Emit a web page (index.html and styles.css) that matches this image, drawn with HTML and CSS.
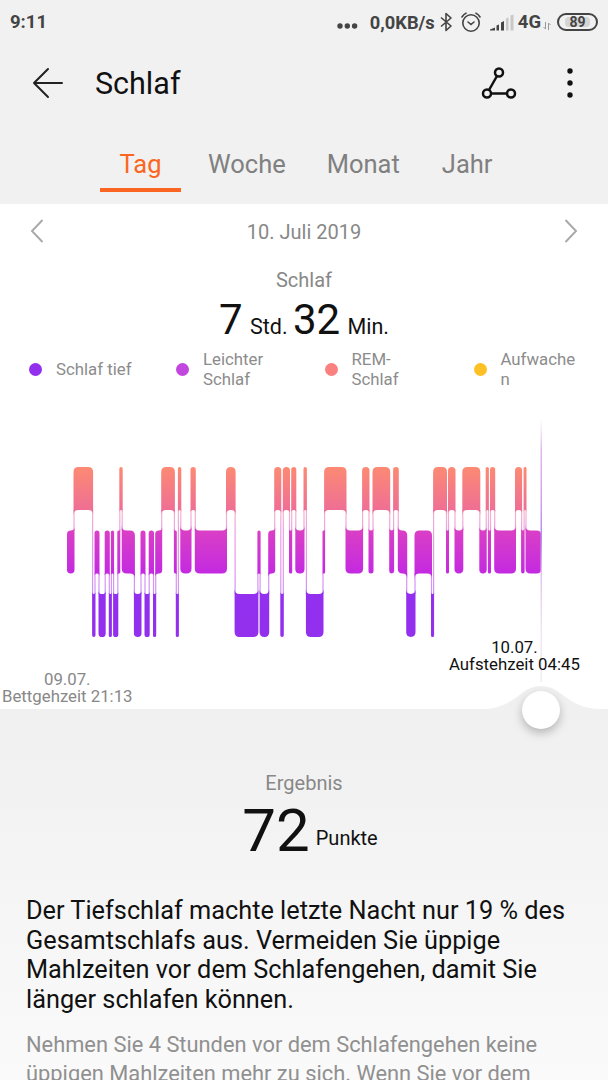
FILE: index.html
```html
<!DOCTYPE html>
<html lang="de">
<head>
  <meta charset="UTF-8">
  <meta name="viewport" content="width=device-width, initial-scale=1.0">
  <title>Schlaf</title>
  <link rel="stylesheet" href="styles.css">
</head>
<body>
  <div class="app">
    <div class="status-bar">
      <span class="time">9:11</span>
      <div class="status-icons">
        <svg class="dots" width="21" height="6" viewBox="0 0 21 6" fill="#444"><circle cx="3" cy="3" r="2.7"/><circle cx="10.3" cy="3" r="2.7"/><circle cx="17.6" cy="3" r="2.7"/></svg>
        <span class="speed">0,0KB/s</span>
        <svg class="bluetooth" width="12" height="20" viewBox="0 0 12 20" fill="none" stroke="#444" stroke-width="1.6" stroke-linejoin="round"><path d="M1 5.5L11 14L6 18.5V1.5L11 6L1 14.5"/></svg>
        <svg class="alarm" width="20" height="20" viewBox="0 0 20 20" fill="none" stroke="#444" stroke-width="1.6" stroke-linecap="round"><circle cx="10" cy="11" r="8.2"/><path d="M7 10L10 12.5L13 10M1 5Q2.500 2.300 5 1.200M19 5Q17.500 2.300 15 1.200"/></svg>
        <svg class="signal" width="24" height="17" viewBox="0 0 24 17" fill="#444"><path d="M0 15.500L5 13.500V16.500H0ZM6.500 11.500L9 10.500V16.500H6.500ZM11 8.500L14 7V16.500H11Z"/><path d="M16 4.500L18.500 3.500V16.500H16ZM20.500 1.500L23.500 .5V16.500H20.500Z" fill="#c8c8c8"/></svg>
        <span class="net">4G</span>
        <svg class="updown" width="8" height="8" viewBox="0 0 8 8" fill="none" stroke="#999" stroke-width="1"><path d="M2.500 0V7L.5 5M5.500 8V1L7.500 3"/></svg>
        <span class="battery"><span class="battery-level">89</span></span>
      </div>
    </div>

    <div class="header">
      <svg class="back" width="32" height="32" viewBox="0 0 32 32" fill="none" stroke="#222" stroke-width="2" stroke-linecap="round" stroke-linejoin="round"><path d="M16 2L2 16L16 30M2 16H30"/></svg>
      <h1>Schlaf</h1>
      <svg class="share" width="36" height="32" viewBox="0 0 36 32" fill="none" stroke="#111" stroke-width="2.500"><circle cx="18" cy="5.500" r="4"/><circle cx="6" cy="26.500" r="4"/><circle cx="30" cy="26.500" r="4"/><path d="M16 9L8 23M10 26.500H26"/></svg>
      <svg class="more" width="6" height="32" viewBox="0 0 6 32" fill="#111"><circle cx="3" cy="4" r="2.700"/><circle cx="3" cy="16" r="2.700"/><circle cx="3" cy="28" r="2.700"/></svg>
    </div>

    <div class="tabs">
      <div class="tab active">Tag</div>
      <div class="tab">Woche</div>
      <div class="tab">Monat</div>
      <div class="tab">Jahr</div>
    </div>

    <div class="panel">
      <div class="date-row">
        <svg width="14" height="24" viewBox="0 0 14 24" fill="none" stroke="#aaa" stroke-width="2"><path d="M12.500 1L2 12L12.500 23"/></svg>
        <span>10. Juli 2019</span>
        <svg width="14" height="24" viewBox="0 0 14 24" fill="none" stroke="#aaa" stroke-width="2"><path d="M1.500 1L12 12L1.500 23"/></svg>
      </div>
      <div class="label">Schlaf</div>
      <div class="duration"><b>7</b> Std. <b>32</b> Min.</div>
      <div class="legend">
        <div class="legend-item"><i class="dot deep"></i><span>Schlaf tief</span></div>
        <div class="legend-item"><i class="dot light"></i><span>Leichter<br>Schlaf</span></div>
        <div class="legend-item"><i class="dot rem"></i><span>REM-<br>Schlaf</span></div>
        <div class="legend-item"><i class="dot awake"></i><span>Aufwache<br>n</span></div>
      </div>
      <div class="chart">
        <svg id="chart" width="608" height="309" viewBox="0 400 608 309">
          <defs>
            <linearGradient id="stages" gradientUnits="userSpaceOnUse" x1="0" y1="467" x2="0" y2="637">
              <stop offset="0" stop-color="#fc8a73"/>
              <stop offset=".25" stop-color="#ef6f94"/>
              <stop offset=".37" stop-color="#da40c4"/>
              <stop offset=".62" stop-color="#c42ae0"/>
              <stop offset=".75" stop-color="#932fee"/>
              <stop offset="1" stop-color="#9230ee"/>
            </linearGradient>
            <linearGradient id="cursor" x1="0" y1="0" x2="0" y2="1">
              <stop offset="0" stop-color="#e9c6ee"/>
              <stop offset=".3" stop-color="#d3a3ea"/>
              <stop offset=".45" stop-color="#b78cf0"/>
              <stop offset=".6" stop-color="#e6c4f0"/>
              <stop offset=".8" stop-color="#f1e4f4"/>
              <stop offset="1" stop-color="#eee"/>
            </linearGradient>
          </defs>
          <g id="bars" fill="url(#stages)"></g>
          <path d="M541 418L542 450V682H540.500V450Z" fill="url(#cursor)"/>
          <path d="M486 709C516 707 520 686 541 686S566 707 598 709Z" fill="#f0f0f0"/>
        </svg>
        <div class="bed-time">09.07.<br>Bettgehzeit 21:13</div>
        <div class="wake-time">10.07.<br>Aufstehzeit 04:45</div>
        <div class="knob"></div>
      </div>
    </div>

    <div class="result">
      <div class="label">Ergebnis</div>
      <div class="score"><b>72</b><span>Punkte</span></div>
      <p class="advice">Der Tiefschlaf machte letzte Nacht nur 19 % des Gesamtschlafs aus. Vermeiden Sie üppige Mahlzeiten vor dem Schlafengehen, damit Sie länger schlafen können.</p>
      <p class="detail">Nehmen Sie 4 Stunden vor dem Schlafengehen keine üppigen Mahlzeiten mehr zu sich. Wenn Sie vor dem</p>
    </div>
  </div>
  <script src="chart.js"></script>
</body>
</html>
```
FILE: styles.css
```css
* {
  box-sizing: border-box;
}

body {
  margin: 0;
  background: #f1f1f1;
  font-family: Roboto, "Liberation Sans", sans-serif;
  color: #111;
}

.app {
  width: 608px;
  height: 1080px;
  overflow: hidden;
}

h1, p {
  margin: 0;
}

b {
  font-weight: 400;
}

svg {
  display: block;
  flex: none;
}

.status-bar {
  display: flex;
  justify-content: space-between;
  height: 44px;
  padding: 0 10px;
  align-items: center;
  font-size: 18.5px;
  font-weight: 700;
  color: #444;
}

.status-icons {
  display: flex;
  align-items: center;
}

.dots {
  margin: 8px 12px 0 0;
}

.speed {
  font-size: 18.3px;
}

.bluetooth {
  margin: 0 9px 0 5px;
}

.signal {
  margin: 0 4px 0 9px;
}

.updown {
  margin: 7px 6px 0 2px;
}

.battery {
  width: 41px;
  height: 18px;
  padding: 2px 6px;
  border: 2px solid #444;
  border-radius: 9px;
}

.battery-level {
  display: block;
  height: 10px;
  border-radius: 4px;
  background: #d5d5d5;
  font-size: 14px;
  line-height: 11px;
  text-align: center;
}

.header {
  display: flex;
  align-items: center;
  height: 78px;
  padding: 0 35px 0 32px;
}

.header h1 {
  flex: 1;
  margin-left: 31px;
  font-size: 30.5px;
  font-weight: 400;
}

.more {
  margin-left: 50px;
}

.tabs {
  display: flex;
  height: 82px;
  padding: 20px 0 0 100px;
}

.tab {
  height: 50px;
  margin-right: 27px;
  padding-top: 7px;
  font-size: 25.5px;
  line-height: 31px;
  color: #808080;
}

.tab.active {
  width: 81px;
  border-bottom: 4px solid #fb6522;
  color: #fb6522;
  text-align: center;
}

.tab:nth-child(3) {
  margin: 0 42px 0 14px;
}

.panel {
  height: 505px;
  background: #fff;
}

.date-row {
  display: flex;
  justify-content: space-between;
  align-items: center;
  height: 54px;
  padding: 0 30px;
  font-size: 20px;
  color: #888;
}

.date-row span {
  padding-top: 2px;
}

.label {
  height: 36px;
  font-size: 20px;
  line-height: 36px;
  text-align: center;
  color: #888;
}

.panel .label {
  padding-top: 4px;
}

.duration {
  height: 49px;
  padding-top: 1px;
  font-size: 21.5px;
  line-height: 50px;
  text-align: center;
}

.duration b {
  margin-right: 2px;
  font-size: 42px;
}

.legend {
  display: grid;
  grid-template-columns: 147px 148.500px 149px 1fr;
  height: 52px;
  padding-left: 29px;
}

.legend-item {
  display: flex;
  align-items: center;
  font-size: 16.8px;
  line-height: 20px;
  color: #8c8c8c;
}

.dot {
  width: 13px;
  height: 13px;
  margin-right: 14px;
  border-radius: 50%;
}

.deep {
  background: #9230ee;
}

.light {
  background: #c247de;
}

.rem {
  background: #fb8080;
}

.awake {
  background: #fdc125;
}

.chart {
  position: relative;
  margin-top: 5px;
}

.bed-time,
.wake-time {
  position: absolute;
  font-size: 16.8px;
  line-height: 17px;
  text-align: center;
  white-space: nowrap;
}

.bed-time {
  left: 2px;
  top: 271px;
  color: #888;
}

.wake-time {
  left: 449px;
  top: 239px;
}

.knob {
  position: absolute;
  left: 522px;
  top: 291px;
  width: 38px;
  height: 38px;
  border-radius: 50%;
  background: #fff;
  box-shadow: 0 4px 10px rgba(0, 0, 0, .25);
}

.result {
  height: 371px;
  padding: 56px 26px 0;
  background: linear-gradient(#f0f0f0, #fafafa);
}

.score {
  display: flex;
  justify-content: center;
  align-items: flex-start;
  height: 74px;
  padding-left: 12px;
  font-size: 20px;
  line-height: 60px;
}

.score b {
  margin-right: 6px;
  font-size: 60px;
}

.score span {
  padding-top: 7px;
}

.advice {
  margin-top: 21px;
  font-size: 25.3px;
  line-height: 29.500px;
}

.detail {
  margin-top: 16px;
  font-size: 21.85px;
  line-height: 29px;
  color: #909090;
}
```
FILE: chart.js
```javascript
const tops = { R: 467, L: 530.5, D: 594 };
const barHeight = 43;

// stage letter and start x
const data = 'L67.5 R74 D92.6 L95 D99 L105.2 D109.3 L111.4 D113.6 L117.8 R119.8 L122.2 D134.4 L141 D145 L149.2 D153.5 L155.7 R161.7 L174.4 D176.3 R178.4 L180.8 R191 L195.3 R226.5 D235.1 L257.9 D260.1 L268.7 R274.7 D280.8 R283.3 L289.5 R291.7 L295.8 R304 D306.4 L323 R324.6 L346 R362.6 L369 R373 L389.7 R393.6 L398.3 D406.7 L415 D431.5 R433.6 L446.5 R448.5 L455 R462.8 L479.8 R486.2 L488.4 R490.5 L494.7 R515.5 L521.6 R524.1 L526';
const end = 541;

const stages = data.split(' ').map(s => ({ y: tops[s[0]], x: Number(s.slice(1)) }));

let svg = '';
stages.forEach((s, i) => {
  const prev = stages[i - 1];
  const next = stages[i + 1];
  const x0 = s.x - 0.5;
  const x1 = (next ? next.x : end) + 0.5;
  const y0 = s.y;
  const y1 = s.y + barHeight;
  const r = Math.min(5, (x1 - x0) / 2);

  // a corner bends outwards where the line to the neighbour starts
  const lt = prev && prev.y < y0 ? -r : r;
  const lb = prev && prev.y > y0 ? r : -r;
  const rt = next && next.y < y0 ? -r : r;
  const rb = next && next.y > y0 ? r : -r;
  svg += `<path d="M${x0} ${y0 + lt}Q${x0} ${y0} ${x0 + r} ${y0}H${x1 - r}Q${x1} ${y0} ${x1} ${y0 + rt}V${y1 + rb}Q${x1} ${y1} ${x1 - r} ${y1}H${x0 + r}Q${x0} ${y1} ${x0} ${y1 + lb}Z"/>`;

  if (next) {
    const top = Math.min(y0, next.y) + barHeight;
    const bottom = Math.max(y0, next.y);
    svg += `<rect x="${next.x - 0.6}" y="${top}" width="1.2" height="${bottom - top}" opacity=".5"/>`;
  }
});
document.getElementById('bars').innerHTML = svg;
```
